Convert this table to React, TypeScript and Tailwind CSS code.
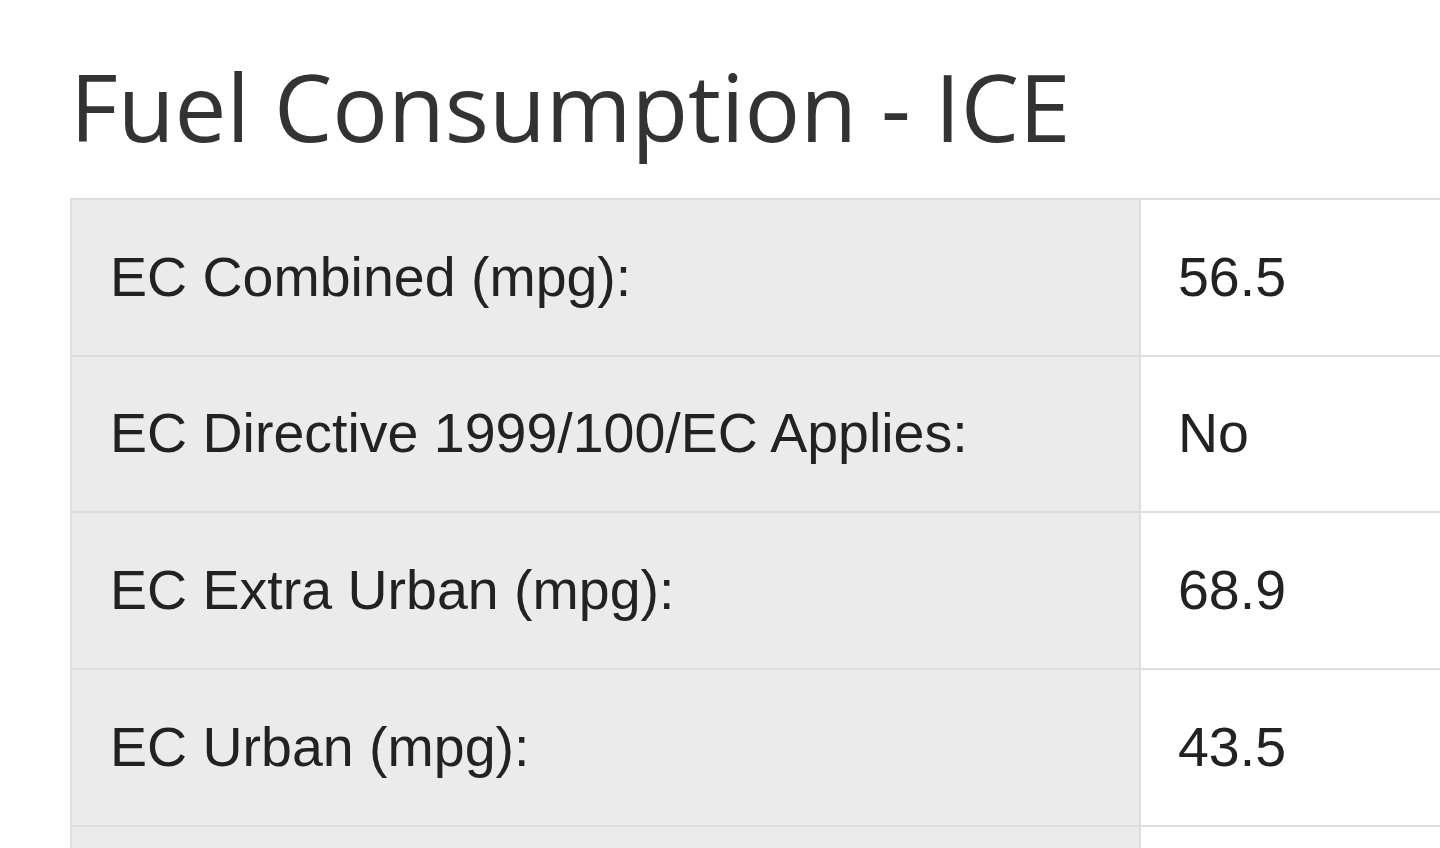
import React from "react";

const rows = [
  { label: "EC Combined (mpg):", value: "56.5" },
  { label: "EC Directive 1999/100/EC Applies:", value: "No" },
  { label: "EC Extra Urban (mpg):", value: "68.9" },
  { label: "EC Urban (mpg):", value: "43.5" },
  { label: "", value: "" },
];

export default function App() {
  return (
    <div className="w-[1440px] h-[848px] overflow-hidden bg-white">
      <div className="pl-[70px] pt-[52px]">
        <h1 className="text-[92.6px] leading-[108px] text-[#333] font-['Open_Sans',sans-serif] font-normal whitespace-nowrap">
          Fuel Consumption - ICE
        </h1>
        <table className="mt-[38px] w-[1600px] border-collapse font-['Liberation_Sans',Arial,sans-serif] text-[55.5px] text-[#222]">
          <tbody>
            {rows.map((row, i) => (
              <tr key={i} className="h-[156.7px]">
                <th className="w-[1069px] bg-[#ebebeb] border-2 border-[#dedede] pl-[38px] text-left font-normal align-middle whitespace-nowrap">
                  {row.label}
                </th>
                <td className="border-2 border-[#dedede] pl-[37px] align-middle">{row.value}</td>
              </tr>
            ))}
          </tbody>
        </table>
      </div>
    </div>
  );
}
